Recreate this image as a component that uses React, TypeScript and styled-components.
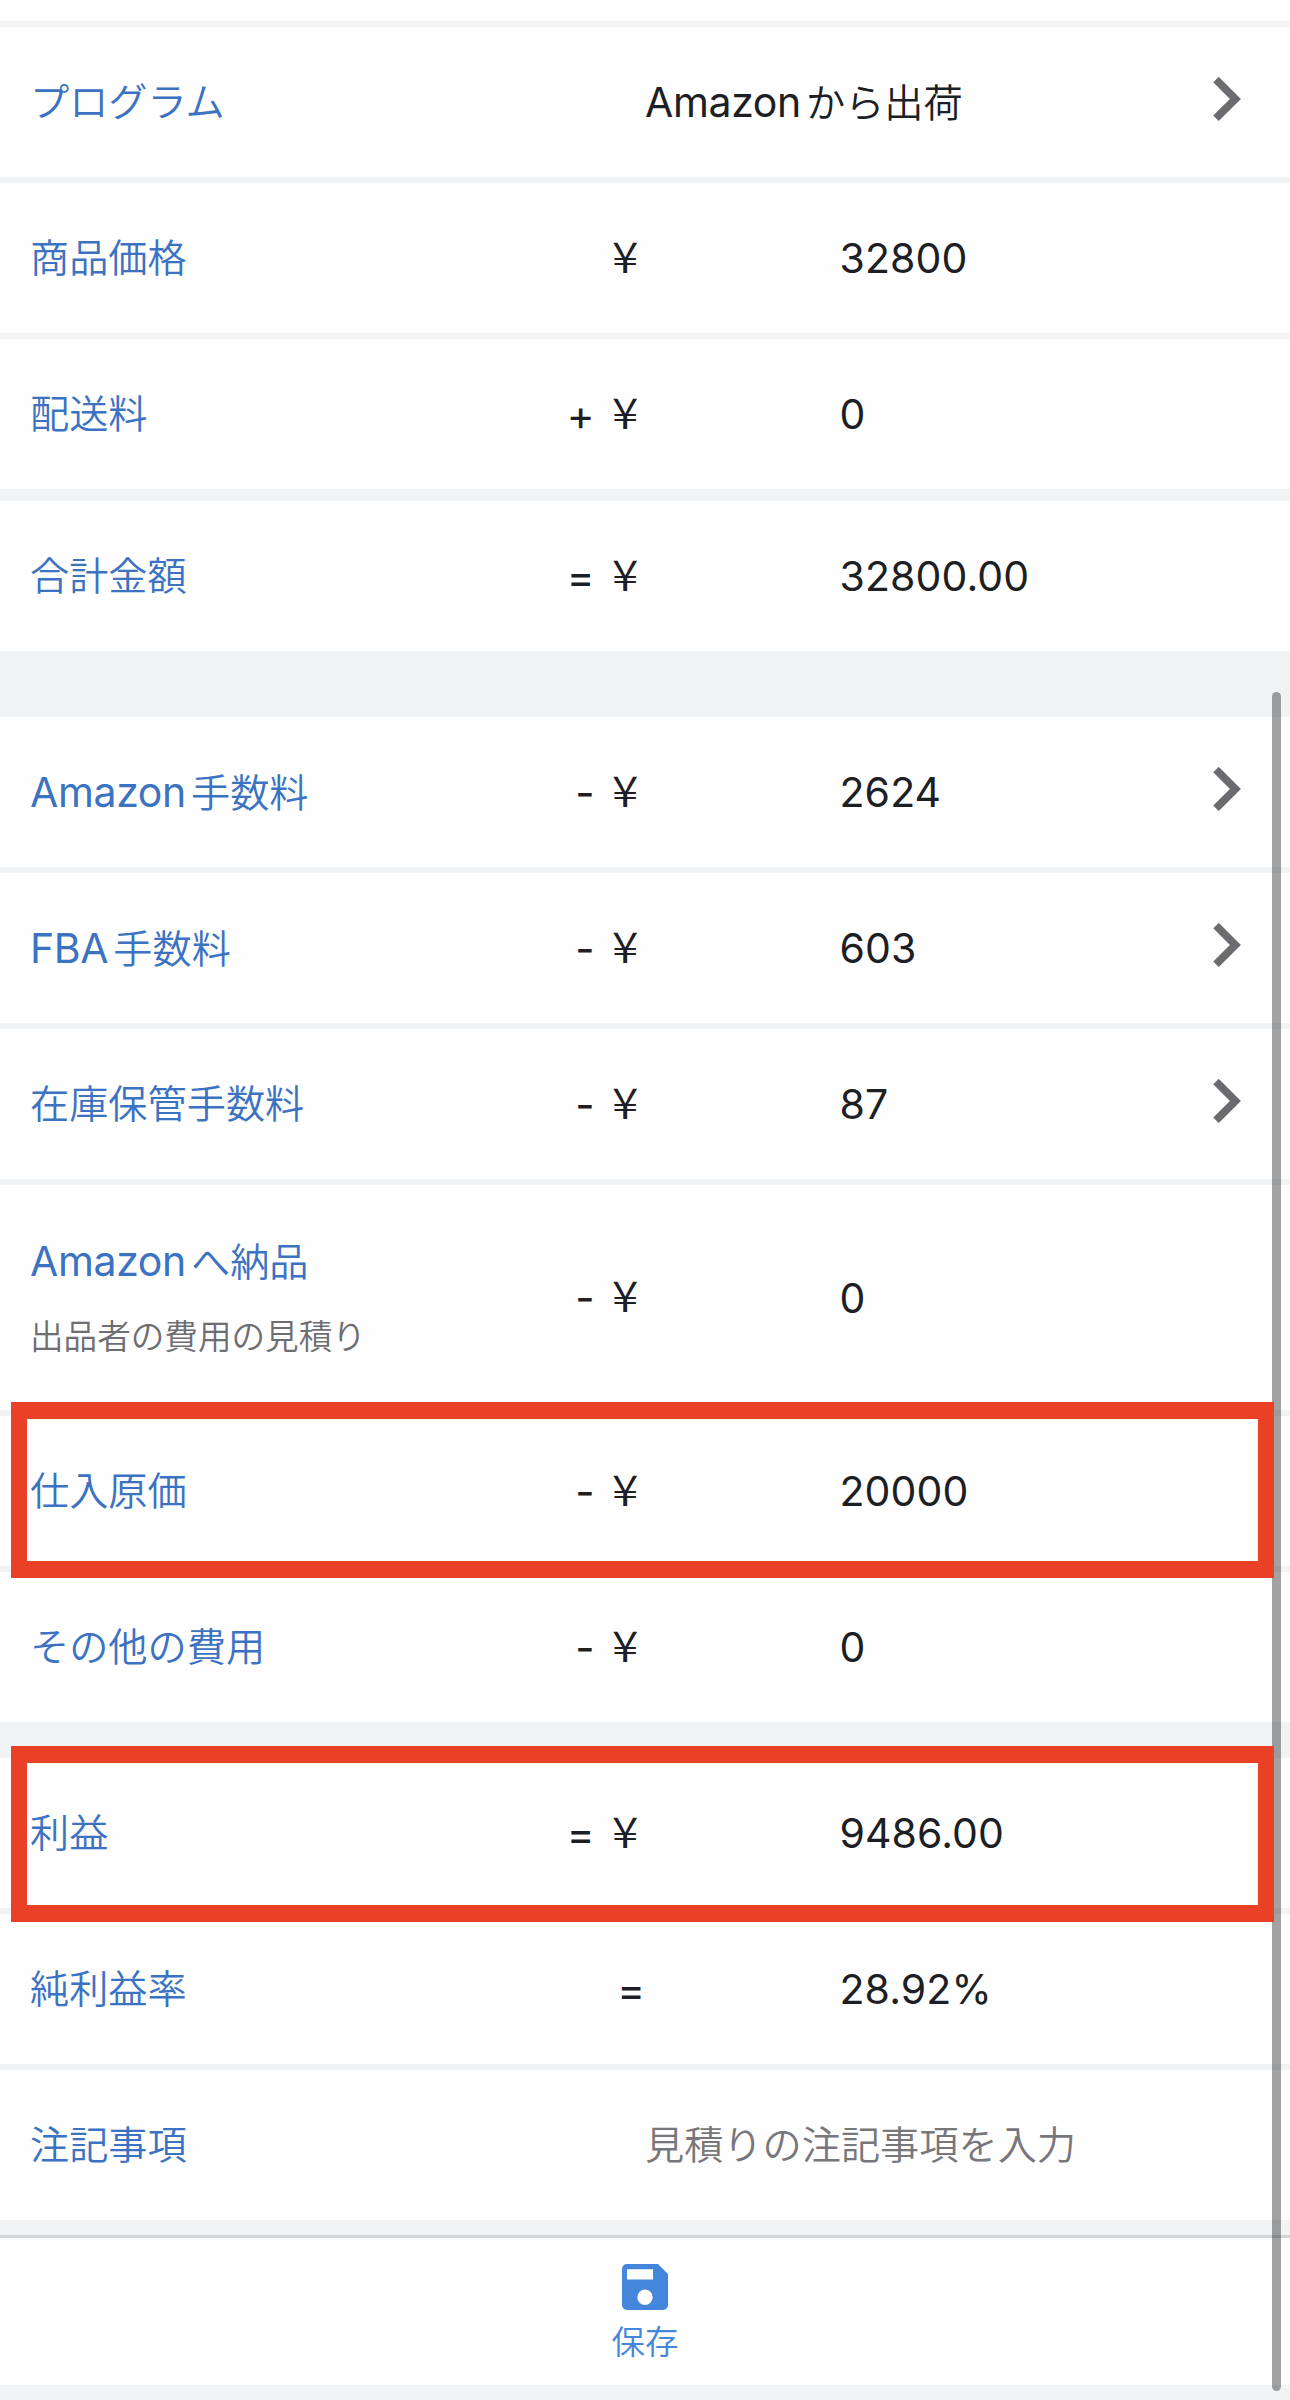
import React from "react";
import styled, { createGlobalStyle } from "styled-components";

const GlobalStyle = createGlobalStyle`
  * { box-sizing: border-box; }
  html, body { margin: 0; padding: 0; background: #f1f3f5; }
  body { overflow: hidden; }
`;

const Screen = styled.main`
  position: relative;
  width: 1290px;
  height: 2400px;
  display: flex;
  flex-direction: column;
  background: #f1f3f5;
  overflow: hidden;
  font-family: Inter, "Noto Sans CJK JP", sans-serif;
  font-size: 39.2px;
  line-height: 60px;
  color: #1c2024;
`;

const PreviousRow = styled.div`
  height: 21px;
  flex: none;
  background: #fefefe;
`;

const Section = styled.section<{ $gap: number }>`
  display: flex;
  flex-direction: column;
  gap: 6px;
  margin-top: ${(p) => p.$gap}px;
`;

const Row = styled.div<{ $tall?: boolean }>`
  position: relative;
  display: grid;
  grid-template-columns: 615px 1fr 77px;
  align-items: center;
  height: ${(p) => (p.$tall ? 225 : 150)}px;
  padding-left: 30px;
  background: #fefefe;
  white-space: nowrap;
`;

const AmountRow = styled(Row)`
  grid-template-columns: 500px 115px 194.5px 1fr 77px;
`;

const Labels = styled.div<{ $tall?: boolean }>`
  display: flex;
  flex-direction: column;
  gap: 15px;
  padding-top: ${(p) => (p.$tall ? 2 : 0)}px;
`;

const Label = styled.span`
  color: #3c72c2;
  font-weight: 350;
`;

const Latin = styled.span`
  font-size: 41px;
  font-weight: 400;
  letter-spacing: -0.35px;
  margin-right: 5px;
`;

const Hint = styled.span`
  font-size: 33.6px;
  font-weight: 350;
  color: #6e6e72;
`;

const Sign = styled.span<{ $flush?: boolean }>`
  display: flex;
  justify-content: flex-end;
  padding-right: ${(p) => (p.$flush ? 0 : 7)}px;
  font-size: 42px;
`;

const Operator = styled.span`
  padding-top: 1px;
`;

const Yen = styled.span`
  margin: -3px 0 3px 20px;
  font-family: "Noto Sans CJK JP", sans-serif;
  font-size: 42.5px;
  font-weight: 350;
  transform: scaleX(1.13);
  transform-origin: right center;
`;

const Value = styled.span`
  grid-column: 4;
  font-size: 41px;
  letter-spacing: 0.1px;
`;

const Choice = styled.span`
  font-weight: 350;
`;

const Placeholder = styled(Choice)`
  color: #77777b;
`;

const ChevronIcon = styled.svg`
  grid-column: -2;
  width: 28px;
  height: 44px;
  margin-bottom: 6px;
`;

const Highlight = styled.div<{ $top: number }>`
  position: absolute;
  z-index: 3;
  left: 10.5px;
  top: ${(p) => p.$top}px;
  width: 1263px;
  height: 176px;
  border: solid #ea4025;
  border-width: 17px 16px;
  pointer-events: none;
`;

const SaveBar = styled.footer`
  display: flex;
  flex-direction: column;
  align-items: center;
  height: 150px;
  margin-top: 15px;
  padding-top: 26px;
  border-top: 3px solid #d3d5d8;
  background: #fefefe;
`;

const SaveIcon = styled.svg`
  width: 46px;
  height: 46px;
`;

const SaveLabel = styled.span`
  margin-top: 8px;
  font-size: 33.5px;
  line-height: 48px;
  font-weight: 350;
  color: #4486dc;
`;

const ScrollThumb = styled.div`
  position: absolute;
  z-index: 2;
  top: 692px;
  left: 1272px;
  width: 9px;
  height: 1699px;
  border-radius: 5px;
  background: rgba(0, 0, 0, 0.36);
`;

const Chevron = () => (
  <ChevronIcon viewBox="0 0 28 44">
    <path d="M3 2.6 22.4 21.9 3 41.2" fill="none" stroke="#6c6c70" strokeWidth="7.8" />
  </ChevronIcon>
);

type AmountProps = {
  latin?: string;
  label: string;
  hint?: string;
  op?: string;
  yen?: boolean;
  value: string;
  link?: boolean;
  highlightTop?: number;
};

const Amount = ({ latin, label, hint, op, yen = true, value, link, highlightTop }: AmountProps) => (
  <AmountRow $tall={!!hint}>
    <Labels $tall={!!hint}>
      <Label>
        {latin && <Latin>{latin}</Latin>}
        {label}
      </Label>
      {hint && <Hint>{hint}</Hint>}
    </Labels>
    <Sign $flush={!yen}>
      {op && <Operator>{op}</Operator>}
      {yen && <Yen>¥</Yen>}
    </Sign>
    <Value>{value}</Value>
    {link && <Chevron />}
    {highlightTop !== undefined && <Highlight $top={highlightTop} />}
  </AmountRow>
);

export default function App() {
  return (
    <>
      <GlobalStyle />
      <Screen>
        <PreviousRow />
        <Section $gap={6}>
          <Row>
            <Label>プログラム</Label>
            <Choice>
              <Latin>Amazon</Latin>から出荷
            </Choice>
            <Chevron />
          </Row>
          <Amount label="商品価格" value="32800" />
          <Amount label="配送料" op="+" value="0" />
        </Section>
        <Section $gap={12}>
          <Amount label="合計金額" op="=" value="32800.00" />
        </Section>
        <Section $gap={66}>
          <Amount latin="Amazon" label="手数料" op="-" value="2624" link />
          <Amount latin="FBA" label="手数料" op="-" value="603" link />
          <Amount label="在庫保管手数料" op="-" value="87" link />
          <Amount latin="Amazon" label="へ納品" hint="出品者の費用の見積り" op="-" value="0" />
          <Amount label="仕入原価" op="-" value="20000" highlightTop={-14} />
          <Amount label="その他の費用" op="-" value="0" />
        </Section>
        <Section $gap={36}>
          <Amount label="利益" op="=" value="9486.00" highlightTop={-12} />
          <Amount label="純利益率" op="=" yen={false} value="28.92%" />
          <Row>
            <Label>注記事項</Label>
            <Placeholder>見積りの注記事項を入力</Placeholder>
          </Row>
        </Section>
        <SaveBar>
          <SaveIcon viewBox="0 0 46 46">
            <path
              fill="#4486dc"
              fillRule="evenodd"
              d="M5 0H36L46 10V41A5 5 0 0 1 41 46H5A5 5 0 0 1 0 41V5A5 5 0 0 1 5 0ZM5 5.2V15.5H31V5.2ZM23 25.5A7.7 7.7 0 1 0 23 40.9A7.7 7.7 0 1 0 23 25.5Z"
            />
          </SaveIcon>
          <SaveLabel>保存</SaveLabel>
        </SaveBar>
        <ScrollThumb />
      </Screen>
    </>
  );
}
